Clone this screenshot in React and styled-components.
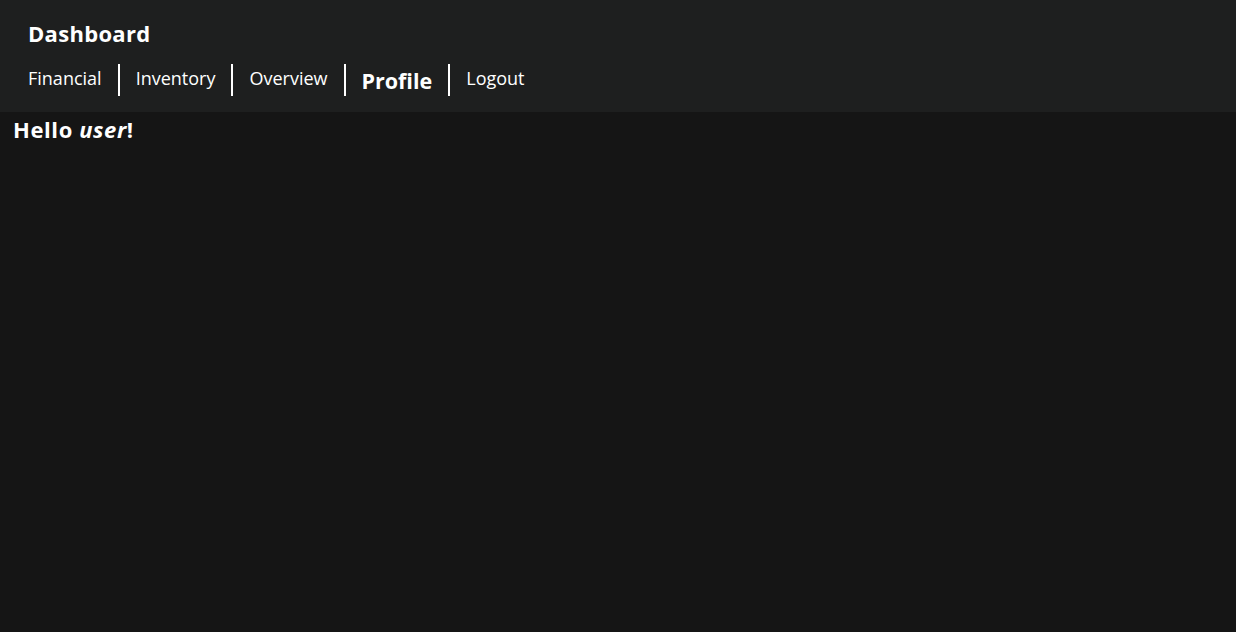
import React from "react";
import styled, { createGlobalStyle } from "styled-components";

const GlobalStyle = createGlobalStyle`
  html, body {
    margin: 0;
    padding: 0;
    background: #151515;
    color: #ffffff;
    font-family: "Open Sans", "Noto Sans", sans-serif;
  }
`;

const Header = styled.header`
  background: #1e1f1f;
  padding: 16px 28px;
  height: 112px;
  box-sizing: border-box;
`;

const Title = styled.h1`
  margin: 0;
  font-size: 22px;
  font-weight: 700;
  line-height: 34px;
  letter-spacing: 0.3px;
`;

const Nav = styled.nav`
  display: flex;
  margin-top: 14px;
`;

const NavItem = styled.a`
  color: #ffffff;
  text-decoration: none;
  font-size: ${(p) => (p.$active ? "21.5px" : "18px")};
  font-weight: ${(p) => (p.$active ? 700 : 400)};
  line-height: ${(p) => (p.$active ? "34px" : "28px")};
  height: 32px;
  padding: 0 16px;
  border-left: 2px solid #ffffff;

  &:first-child {
    padding-left: 0;
    border-left: none;
  }
`;

const Main = styled.main`
  padding: 3px 13px;
`;

const Greeting = styled.h2`
  margin: 0;
  font-size: 22px;
  font-weight: 700;
  line-height: 28px;
  letter-spacing: 0.6px;
`;

const links = ["Financial", "Inventory", "Overview", "Profile", "Logout"];

export default function App() {
  return (
    <>
      <GlobalStyle />
      <Header>
        <Title>Dashboard</Title>
        <Nav>
          {links.map((l) => (
            <NavItem key={l} href="#" $active={l === "Profile"}>
              {l}
            </NavItem>
          ))}
        </Nav>
      </Header>
      <Main>
        <Greeting>
          Hello <em>user</em>!
        </Greeting>
      </Main>
    </>
  );
}
